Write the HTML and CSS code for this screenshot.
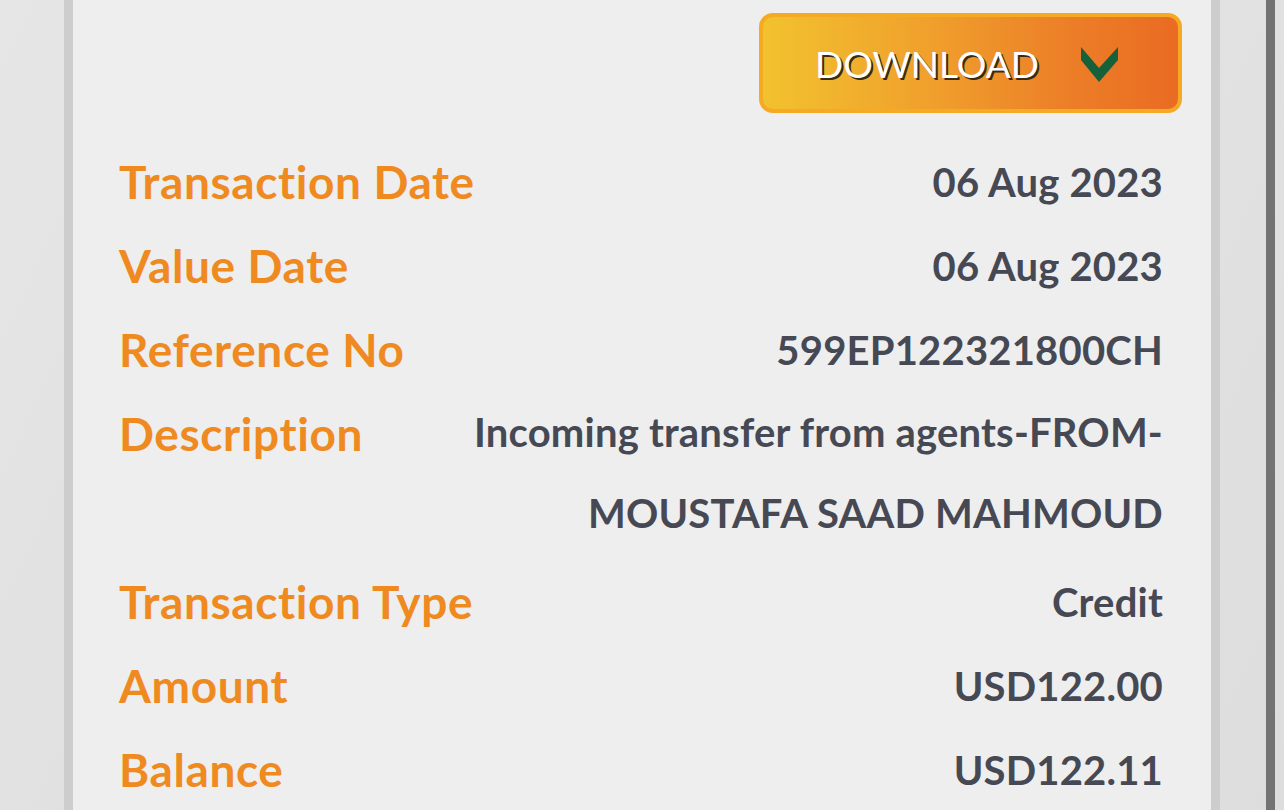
FILE: index.html
```html
<!DOCTYPE html>
<html>
<head>
  <title>Transaction Details</title>
  <link rel="stylesheet" href="styles.css">
</head>
<body>
  <div class="page">
    <div class="card">
      <div class="actions">
        <button class="download">
          <span>DOWNLOAD</span>
          <svg width="37" height="35" viewBox="0 0 37 35"><polygon points="0,0 18,21 37,0 37,13 18,35 0,13" fill="#17613a"/></svg>
        </button>
      </div>
      <div class="details">
        <div class="row"><div class="label">Transaction Date</div><div class="value">06 Aug 2023</div></div>
        <div class="row"><div class="label">Value Date</div><div class="value">06 Aug 2023</div></div>
        <div class="row"><div class="label">Reference No</div><div class="value">599EP122321800CH</div></div>
        <div class="row"><div class="label">Description</div><div class="value wrap">Incoming transfer from agents-FROM-MOUSTAFA SAAD MAHMOUD</div></div>
        <div class="row"><div class="label">Transaction Type</div><div class="value">Credit</div></div>
        <div class="row"><div class="label">Amount</div><div class="value">USD122.00</div></div>
        <div class="row"><div class="label">Balance</div><div class="value">USD122.11</div></div>
      </div>
    </div>
  </div>
</body>
</html>
```

FILE: styles.css
```css
html, body {
  margin: 0;
  background: #e3e3e3;
  font-family: Lato, "Noto Sans", sans-serif;
  overflow: hidden;
}
.page {
  display: flex;
  height: 810px;
  padding-left: 64px;
  /* dark scroll track near the right edge, over the faint diagonal backdrop */
  background:
    linear-gradient(90deg, transparent 1266px, #737373 1266px, #737373 1275px, transparent 1275px),
    linear-gradient(115deg, #e6e6e6 0%, #dedede 40%, #e4e4e4 60%, #dddddd 100%);
}
.card {
  flex: 0 0 auto;
  width: 1063px;
  background: #eeeeee;
  border-left: 9px solid #cdcdcd;
  border-right: 9px solid #cdcdcd;
  padding: 13px 29px 0 46px;
}
.actions {
  display: flex;
  justify-content: flex-end;
}
.download {
  width: 423px;
  height: 100px;
  border: 4px solid #f6a923;
  border-radius: 14px;
  background: linear-gradient(90deg, #f2c22f 0%, #f0a02c 40%, #ec7d27 75%, #ea6b23 100%);
  display: flex;
  align-items: center;
  justify-content: center;
  gap: 42px;
  padding: 0 8px 0 0;
  font-family: Lato, sans-serif;
  font-weight: 400;
  font-size: 37px;
  color: #ffffff;
  text-shadow: 2px 2px 0 #3b2a12;
  cursor: pointer;
}
.download svg {
  margin-top: 2px;
}
.details {
  padding-top: 27px;
  padding-right: 19px;
}
.row {
  display: flex;
  justify-content: space-between;
  font-weight: 700;
  line-height: 84px;
}
.label {
  color: #ee8a1f;
  font-size: 46px;
  letter-spacing: 0.6px;
  white-space: nowrap;
}
.value {
  color: #464953;
  font-size: 40px;
  letter-spacing: 0.2px;
  text-align: right;
}
.value.wrap {
  max-width: 730px;
  line-height: 81px;
  padding-bottom: 6px;
}
```
